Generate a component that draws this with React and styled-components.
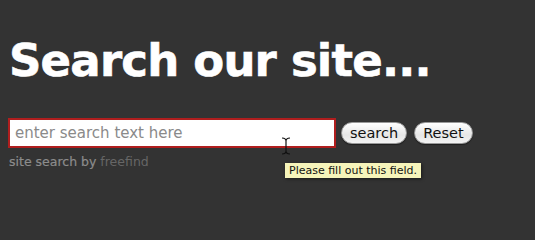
import React from 'react'
import styled, { createGlobalStyle } from 'styled-components'

const GlobalStyle = createGlobalStyle`
  html, body {
    margin: 0;
    padding: 0;
    background: #333333;
  }
  body {
    font-family: "DejaVu Sans", Verdana, sans-serif;
  }
`

const Page = styled.div`
  width: 535px;
  height: 205px;
  background: #333333;
  padding: 32px 0 0 9px;
  box-sizing: border-box;
  overflow: hidden;
`

const Title = styled.h1`
  margin: 0;
  font-family: "DejaVu Sans", Verdana, sans-serif;
  font-weight: bold;
  font-size: 45px;
  line-height: 57px;
  color: #ffffff;
  letter-spacing: -0.8px;
  -webkit-text-stroke: 0.6px #ffffff;
`

const SearchForm = styled.form`
  display: flex;
  align-items: center;
  gap: 5px;
  margin-top: 29px;
  margin-left: -1px;
`

const Field = styled.div`
  position: relative;
`

const SearchInput = styled.input`
  width: 328px;
  height: 30px;
  box-sizing: border-box;
  border: 2px solid #b01e1e;
  background: #ffffff;
  padding: 0 5px;
  font-family: "DejaVu Sans", Verdana, sans-serif;
  font-size: 15px;
  color: #333;
  outline: none;

  &::placeholder {
    color: #8a8a8a;
  }
`

const PillButton = styled.button`
  height: 22px;
  padding: 0 ${p => p.$pad}px;
  border: 1px solid #999;
  border-radius: 11px;
  background: linear-gradient(#ffffff, #e6e6e6 60%, #f4f4f4);
  font-family: "DejaVu Sans", Verdana, sans-serif;
  font-size: 14.5px;
  color: #111;
  line-height: 20px;
  box-shadow: 0 1px 1px rgba(0,0,0,0.4);
  margin-left: ${p => p.$gap}px;
`

const Credit = styled.div`
  margin-top: 6px;
  font-family: "DejaVu Sans", Verdana, sans-serif;
  font-size: 12.5px;
  color: #8c8c8c;
  -webkit-text-stroke: 0.2px #8c8c8c;

  a {
    color: #666666;
    -webkit-text-stroke: 0;
    text-decoration: none;
  }
`

const Tooltip = styled.div`
  position: absolute;
  left: 277px;
  top: 45px;
  background: #f6f4ba;
  color: #111;
  font-family: "DejaVu Sans", Verdana, sans-serif;
  font-size: 11px;
  line-height: 13px;
  padding: 1px 4px;
  white-space: nowrap;
  box-shadow: 1px 1px 3px rgba(0,0,0,0.5);
`

const Cursor = styled.svg`
  position: absolute;
  left: 273px;
  top: 19px;
`

export default function App() {
  return (
    <Page>
      <GlobalStyle />
      <Title>Search our site...</Title>
      <SearchForm onSubmit={e => e.preventDefault()}>
        <Field>
          <SearchInput type="text" placeholder="enter search text here" required />
          <Cursor width="10" height="18" viewBox="0 0 10 18">
            <path d="M1 1 Q5 1 5 4 L5 14 Q5 17 1 17 M9 1 Q5 1 5 4 M5 14 Q5 17 9 17" fill="none" stroke="#111" strokeWidth="1.2" />
          </Cursor>
          <Tooltip>Please fill out this field.</Tooltip>
        </Field>
        <PillButton type="submit" $pad={8} $gap={0}>search</PillButton>
        <PillButton type="reset" $pad={8} $gap={2}>Reset</PillButton>
      </SearchForm>
      <Credit>site search by <a href="#">freefind</a></Credit>
    </Page>
  )
}
